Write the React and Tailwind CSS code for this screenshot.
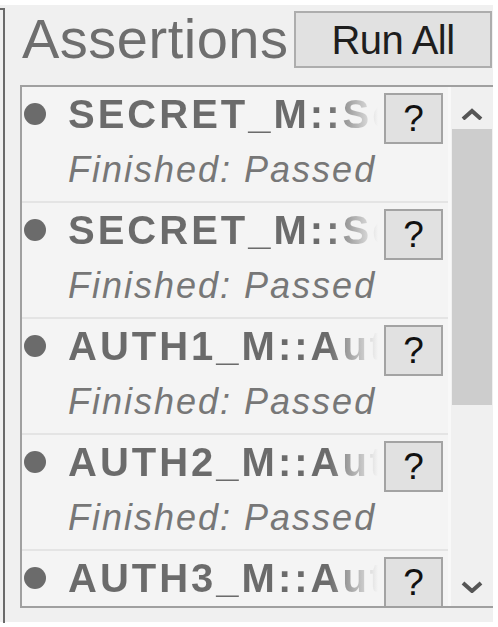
import React from 'react';

const assertions = [
    { name: 'SECRET_M::SecretCheck', status: 'Finished: Passed' },
    { name: 'SECRET_M::SecretStore', status: 'Finished: Passed' },
    { name: 'AUTH1_M::AuthLogin', status: 'Finished: Passed' },
    { name: 'AUTH2_M::AuthToken', status: 'Finished: Passed' },
    { name: 'AUTH3_M::AuthRefresh', status: 'Finished: Passed' },
];

const AssertionRow = ({ name, status }) => (
    <div className="h-[116px] shrink-0 flex border-b-2 border-[#e4e4e4]">
        <div className="flex-1 min-w-0 flex flex-col">
            <div className="flex items-center h-[52px] pt-[1px]">
                <span className="w-[22px] h-[22px] rounded-full bg-[#6b6b6b] ml-[2px] mr-[22px] shrink-0"></span>
                <span className="whitespace-nowrap overflow-hidden w-[310px] text-[40px] font-bold leading-none tracking-[3px] text-transparent bg-linear-to-r from-[#6b6b6b] from-[84%] to-[#f4f4f4] to-[100%] bg-clip-text">
                    {name}
                </span>
            </div>
            <div className="pl-[46px] pt-[13px] text-[36px] italic leading-none tracking-[2px] text-[#777777] whitespace-nowrap">
                {status}
            </div>
        </div>
        <button className="w-[59px] h-[51px] mt-[6px] mr-[5px] bg-[#e1e1e1] border-2 border-[#a3a3a3] text-[37px] leading-none text-[#111111] flex items-center justify-center">
            ?
        </button>
    </div>
);

const ScrollBar = () => (
    <div className="w-[45px] shrink-0 bg-[#f0f0f0] flex flex-col items-center border-l-[3px] border-[#f8f8f8]">
        <svg width="22" height="12" viewBox="0 0 22 12" className="mt-[21px]">
            <path d="M2 11 L11 3 L20 11" fill="none" stroke="#555555" strokeWidth="4" />
        </svg>
        <div className="w-[40px] h-[276px] mt-[9px] bg-[#cdcdcd]"></div>
        <div className="flex-1"></div>
        <svg width="22" height="12" viewBox="0 0 22 12" className="mb-[13px]">
            <path d="M2 2 L11 10 L20 2" fill="none" stroke="#555555" strokeWidth="4" />
        </svg>
    </div>
);

export default function App() {
    return (
        <div className="w-[498px] h-[627px] bg-white overflow-hidden font-['Liberation_Sans',Arial,sans-serif]">
            <div className="mt-[5px] w-[493px] h-[617px] bg-[#f0f0f0] flex">
                <div className="w-[5px] h-[615px] mt-[3px] border-t-2 border-r-2 border-[#6a6a6a] shrink-0"></div>
                <div className="ml-[15px] flex-1 flex flex-col">
                    <div className="flex items-start pt-[6px]">
                        <h1 className="ml-[2px] text-[56px] leading-none font-normal tracking-[0.5px] text-[#6e6e6e] whitespace-nowrap">
                            Assertions
                        </h1>
                        <div className="flex-1"></div>
                        <button className="w-[198px] h-[57px] mr-[1px] bg-[#e1e1e1] border-2 border-[#adadad] text-[40px] leading-none text-[#1e1e1e] tracking-[-0.5px]">
                            Run All
                        </button>
                    </div>
                    <div className="mt-[17px] h-[523px] border-l-2 border-t-2 border-b-2 border-[#a0a0a0] bg-[#f4f4f4] flex overflow-hidden">
                        <div className="flex-1 flex flex-col overflow-hidden">
                            {assertions.map((a, i) => (
                                <AssertionRow key={i} name={a.name} status={a.status} />
                            ))}
                        </div>
                        <ScrollBar />
                    </div>
                </div>
            </div>
        </div>
    );
}
